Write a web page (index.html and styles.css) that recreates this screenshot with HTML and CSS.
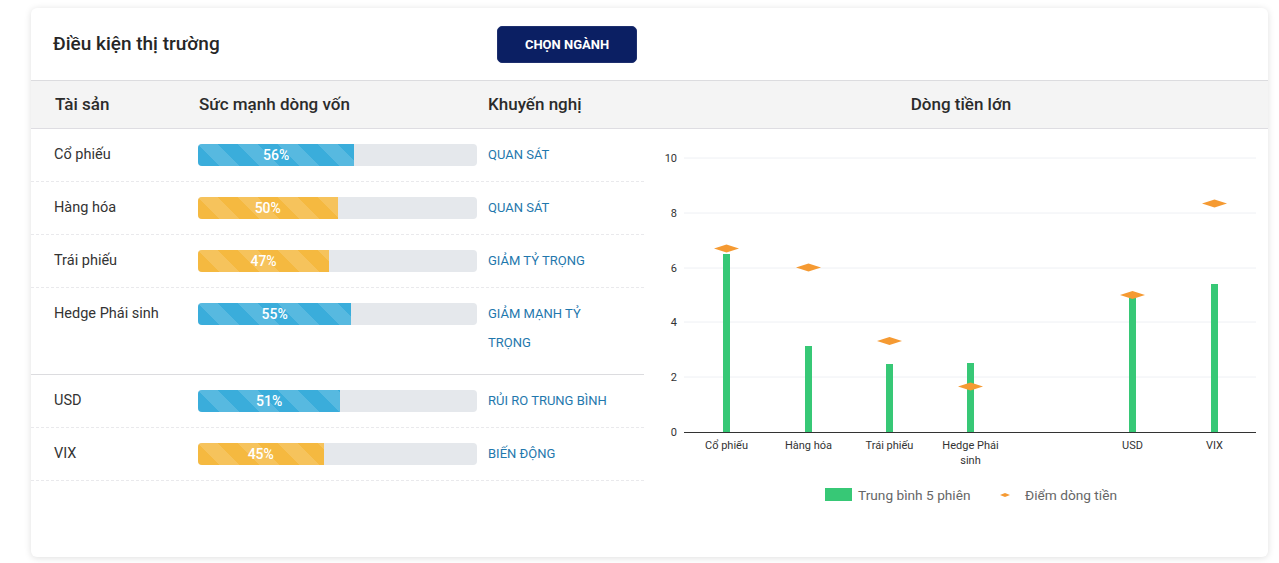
FILE: index.html
```html
<!DOCTYPE html>
<html lang="vi">
<head>
<meta charset="utf-8">
<title>Điều kiện thị trường</title>
<link rel="stylesheet" href="styles.css">
</head>
<body>
<section class="card">
  <header class="card-head">
    <h2 class="card-title">Điều kiện thị trường</h2>
    <button class="btn-sector">CHỌN NGÀNH</button>
  </header>
  <div class="table">
    <div class="thead">
      <div class="thead-left">
        <span class="th th-asset">Tài sản</span>
        <span class="th th-power">Sức mạnh dòng vốn</span>
        <span class="th th-reco">Khuyến nghị</span>
      </div>
      <div class="thead-right">Dòng tiền lớn</div>
    </div>
    <div class="tbody">
      <div class="rows">
        <div class="row">
          <span class="asset">Cổ phiếu</span>
          <div class="bar"><div class="fill blue" style="width:56%">56%</div></div>
          <span class="reco">QUAN SÁT</span>
        </div>
        <div class="row">
          <span class="asset">Hàng hóa</span>
          <div class="bar"><div class="fill yellow" style="width:50%">50%</div></div>
          <span class="reco">QUAN SÁT</span>
        </div>
        <div class="row">
          <span class="asset">Trái phiếu</span>
          <div class="bar"><div class="fill yellow" style="width:47%">47%</div></div>
          <span class="reco">GIẢM TỶ TRỌNG</span>
        </div>
        <div class="row row-tall row-group-end">
          <span class="asset">Hedge Phái sinh</span>
          <div class="bar"><div class="fill blue" style="width:55%">55%</div></div>
          <span class="reco">GIẢM MẠNH TỶ TRỌNG</span>
        </div>
        <div class="row">
          <span class="asset">USD</span>
          <div class="bar"><div class="fill blue" style="width:51%">51%</div></div>
          <span class="reco">RỦI RO TRUNG BÌNH</span>
        </div>
        <div class="row">
          <span class="asset">VIX</span>
          <div class="bar"><div class="fill yellow" style="width:45%">45%</div></div>
          <span class="reco">BIẾN ĐỘNG</span>
        </div>
      </div>
      <div class="chart">
        <svg class="chart-svg" width="624" height="428" viewBox="0 0 624 428">
          <g class="grid">
            <line x1="40" y1="29" x2="612" y2="29"/>
            <line x1="40" y1="84" x2="612" y2="84"/>
            <line x1="40" y1="139" x2="612" y2="139"/>
            <line x1="40" y1="193" x2="612" y2="193"/>
            <line x1="40" y1="248" x2="612" y2="248"/>
          </g>
          <g class="ylab">
            <text x="33" y="33">10</text>
            <text x="33" y="88">8</text>
            <text x="33" y="143">6</text>
            <text x="33" y="197">4</text>
            <text x="33" y="252">2</text>
            <text x="33" y="307">0</text>
          </g>
          <g class="bars">
            <rect x="79" y="125" width="7" height="178"/>
            <rect x="161" y="217" width="7" height="86"/>
            <rect x="242" y="235" width="7" height="68"/>
            <rect x="323" y="234" width="7" height="69"/>
            <rect x="485" y="169" width="7" height="134"/>
            <rect x="567" y="155" width="7" height="148"/>
          </g>
          <line class="axis" x1="40" y1="303.5" x2="612" y2="303.5"/>
          <g class="marks">
            <polygon points="70,119.5 82.5,115.5 95,119.5 82.5,123.5"/>
            <polygon points="152,138.5 164.5,134.5 177,138.5 164.5,142.5"/>
            <polygon points="233,212 245.5,208 258,212 245.5,216"/>
            <polygon points="314,257.5 326.5,253.5 339,257.5 326.5,261.5"/>
            <polygon points="476,166 488.5,162 501,166 488.5,170"/>
            <polygon points="558,74.5 570.5,70.5 583,74.5 570.5,78.5"/>
          </g>
          <g class="xlab">
            <text x="82.5" y="320">Cổ phiếu</text>
            <text x="164.5" y="320">Hàng hóa</text>
            <text x="245.5" y="320">Trái phiếu</text>
            <text x="326.5" y="320">Hedge Phái</text>
            <text x="326.5" y="335">sinh</text>
            <text x="488.5" y="320">USD</text>
            <text x="570.5" y="320">VIX</text>
          </g>
          <g class="legend">
            <rect class="lg-bar" x="181" y="359" width="27" height="13"/>
            <text x="214" y="371">Trung bình 5 phiên</text>
            <polygon class="lg-mark" points="356,366 361,364 366,366 361,368"/>
            <text x="381" y="371">Điểm dòng tiền</text>
          </g>
        </svg>
      </div>
    </div>
  </div>
</section>
</body>
</html>
```

FILE: styles.css
```css
* { box-sizing: border-box; }

html, body {
  margin: 0;
  padding: 0;
  background: #ffffff;
  font-family: Roboto, "Noto Sans", "Liberation Sans", sans-serif;
  color: #333;
}

.card {
  margin: 8px 11px 6px 31px;
  height: 549px;
  background: #fff;
  border-radius: 6px;
  box-shadow: 0 1px 7px rgba(0, 0, 0, 0.13);
  overflow: hidden;
}

.card-head {
  height: 73px;
  display: flex;
  align-items: center;
  padding-left: 22px;
  border-bottom: 1px solid #dcdcdf;
}

.card-title {
  margin: 0;
  width: 444px;
  font-size: 19px;
  font-weight: 500;
  color: #262626;
  line-height: 22px;
}

.btn-sector {
  width: 140px;
  height: 37px;
  border: 1px solid #1d2f6e;
  border-radius: 5px;
  background: #0b1f63;
  color: #fff;
  font-family: Roboto, "Liberation Sans", sans-serif;
  font-size: 13px;
  font-weight: 700;
  cursor: pointer;
}

.thead {
  display: flex;
  height: 48px;
  background: #f4f4f4;
  border-bottom: 1px solid #dedde2;
}

.thead-left {
  width: 613px;
  display: grid;
  grid-template-columns: 168px 289px 1fr;
  align-items: center;
}

.th {
  font-size: 17px;
  font-weight: 500;
  color: #2b2b2b;
  line-height: 20px;
  margin-top: -1px;
}

.th-asset { padding-left: 24px; }

.thead-right {
  flex: 1;
  display: flex;
  align-items: center;
  justify-content: center;
  padding-left: 10px;
  padding-bottom: 1px;
  font-size: 17px;
  font-weight: 500;
  color: #2b2b2b;
}

.tbody {
  display: flex;
}

.rows {
  width: 613px;
  flex: none;
}

.row {
  display: grid;
  grid-template-columns: 156px 279px 1fr;
  column-gap: 11px;
  align-items: start;
  padding: 15px 0;
  border-bottom: 1px dashed #e9e9ec;
}

.row-tall { padding-bottom: 20px; }

.row-group-end { border-bottom: 1px solid #dcdcdf; }

.asset {
  padding-left: 23px;
  font-size: 14.5px;
  line-height: 22px;
  color: #333;
}

.bar {
  height: 22px;
  background: #e5e8ec;
  border-radius: 4px;
  overflow: hidden;
}

.fill {
  height: 100%;
  color: #fff;
  font-size: 14px;
  font-weight: 500;
  line-height: 22px;
  text-align: center;
  background-size: 40px 40px;
  background-image: linear-gradient(45deg,
    rgba(255, 255, 255, 0.15) 25%, transparent 25%,
    transparent 50%, rgba(255, 255, 255, 0.15) 50%,
    rgba(255, 255, 255, 0.15) 75%, transparent 75%, transparent);
}

.fill.blue { background-color: #3aaddb; }
.fill.yellow { background-color: #f5b940; }

.reco {
  font-size: 13px;
  line-height: 29px;
  margin: -4px 0 -3px;
  color: #1f78ad;
  padding-right: 20px;
}

.chart {
  flex: 1;
}

.chart-svg {
  display: block;
  font-family: Roboto, "Liberation Sans", sans-serif;
}

.grid line {
  stroke: #eef0f4;
  stroke-width: 1;
}

.axis {
  stroke: #333;
  stroke-width: 1;
}

.ylab text {
  font-size: 11px;
  fill: #333;
  text-anchor: end;
}

.xlab text {
  font-size: 11px;
  fill: #333;
  text-anchor: middle;
}

.bars rect { fill: #37c876; }

.marks polygon { fill: #f59a32; }

.legend text {
  font-size: 13.7px;
  fill: #666;
}

.lg-bar { fill: #37c876; }
.lg-mark { fill: #f59a32; }
```
